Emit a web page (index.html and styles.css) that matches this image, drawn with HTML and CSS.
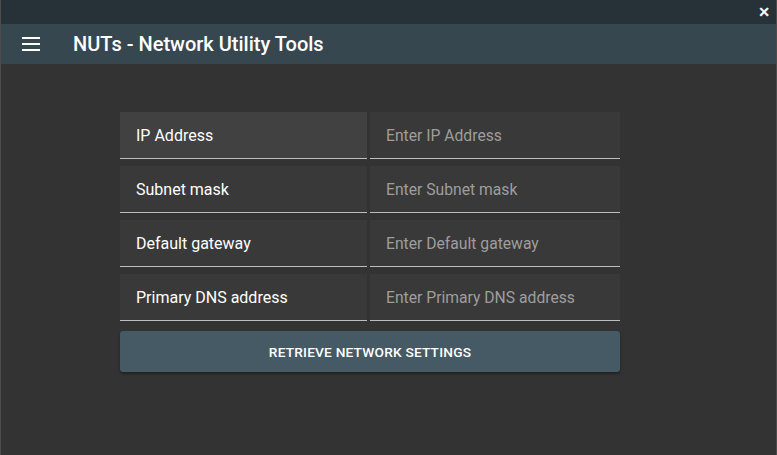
FILE: index.html
```html
<!DOCTYPE html>
<html lang="en">
<head>
  <meta charset="UTF-8" />
  <title>NUTs - Network Utility Tools</title>
  <link rel="stylesheet" href="styles.css">
</head>
<body>
  <div class="window">
    <div class="titlebar">
      <span class="close">&#x2715;</span>
    </div>
    <div class="toolbar">
      <svg class="menu" width="18" height="14" viewBox="0 0 18 14">
        <rect x="0" y="0" width="18" height="2" fill="#fff"/>
        <rect x="0" y="6" width="18" height="2" fill="#fff"/>
        <rect x="0" y="12" width="18" height="2" fill="#fff"/>
      </svg>
      <div class="title">NUTs - Network Utility Tools</div>
    </div>

    <div class="content">
      <form class="settings">
        <div class="grid">
          <div class="cell label active">IP Address</div>
          <div class="cell"><input type="text" placeholder="Enter IP Address"></div>
          <div class="cell label">Subnet mask</div>
          <div class="cell"><input type="text" placeholder="Enter Subnet mask"></div>
          <div class="cell label">Default gateway</div>
          <div class="cell"><input type="text" placeholder="Enter Default gateway"></div>
          <div class="cell label">Primary DNS address</div>
          <div class="cell"><input type="text" placeholder="Enter Primary DNS address"></div>
        </div>
        <button type="button" class="btn">Retrieve network settings</button>
      </form>
    </div>
  </div>
</body>
</html>
```

FILE: styles.css
```css
* { margin: 0; padding: 0; box-sizing: border-box; }
body {
  font-family: Roboto, 'Liberation Sans', sans-serif;
  background: #333333;
}
.window {
  height: 455px;
  background: #333333;
  border-left: 1px solid #4c4c4c;
  border-right: 1px solid #4c4c4c;
}
.titlebar {
  height: 24px;
  background: #263238;
  display: flex;
  justify-content: flex-end;
  align-items: center;
  padding-right: 6px;
}
.close {
  color: #fff;
  font-size: 14px;
  font-weight: bold;
  font-family: 'DejaVu Sans', sans-serif;
  -webkit-text-stroke: 0.6px #fff;
}
.toolbar {
  height: 40px;
  background: #37474f;
  display: flex;
  align-items: center;
  padding-left: 21px;
}
.menu { margin-right: 33px; }
.title {
  color: #fff;
  font-size: 20px;
  font-weight: 500;
}
.content {
  padding: 48px 0 0 119px;
}
.settings { width: 500px; }
.grid {
  display: grid;
  grid-template-columns: 247px 250px;
  column-gap: 3px;
  row-gap: 7px;
}
.cell {
  height: 47px;
  background: #393939;
  border-bottom: 1px solid #bdbdbd;
  display: flex;
  align-items: center;
  padding-left: 16px;
  font-size: 16px;
  color: #fff;
}
.cell.active { background: #414141; }
input {
  width: 100%;
  background: transparent;
  border: none;
  outline: none;
  font-family: inherit;
  font-size: 15.7px;
  color: #fff;
}
input::placeholder { color: #9e9e9e; }
.btn {
  margin-top: 10px;
  width: 100%;
  height: 41px;
  background: #455a64;
  color: #fff;
  border: none;
  border-radius: 3px;
  box-shadow: 0 2px 3px rgba(0,0,0,0.35);
  font-family: inherit;
  font-size: 13.7px;
  font-weight: 500;
  text-transform: uppercase;
  letter-spacing: 0.2px;
  cursor: pointer;
}
```
